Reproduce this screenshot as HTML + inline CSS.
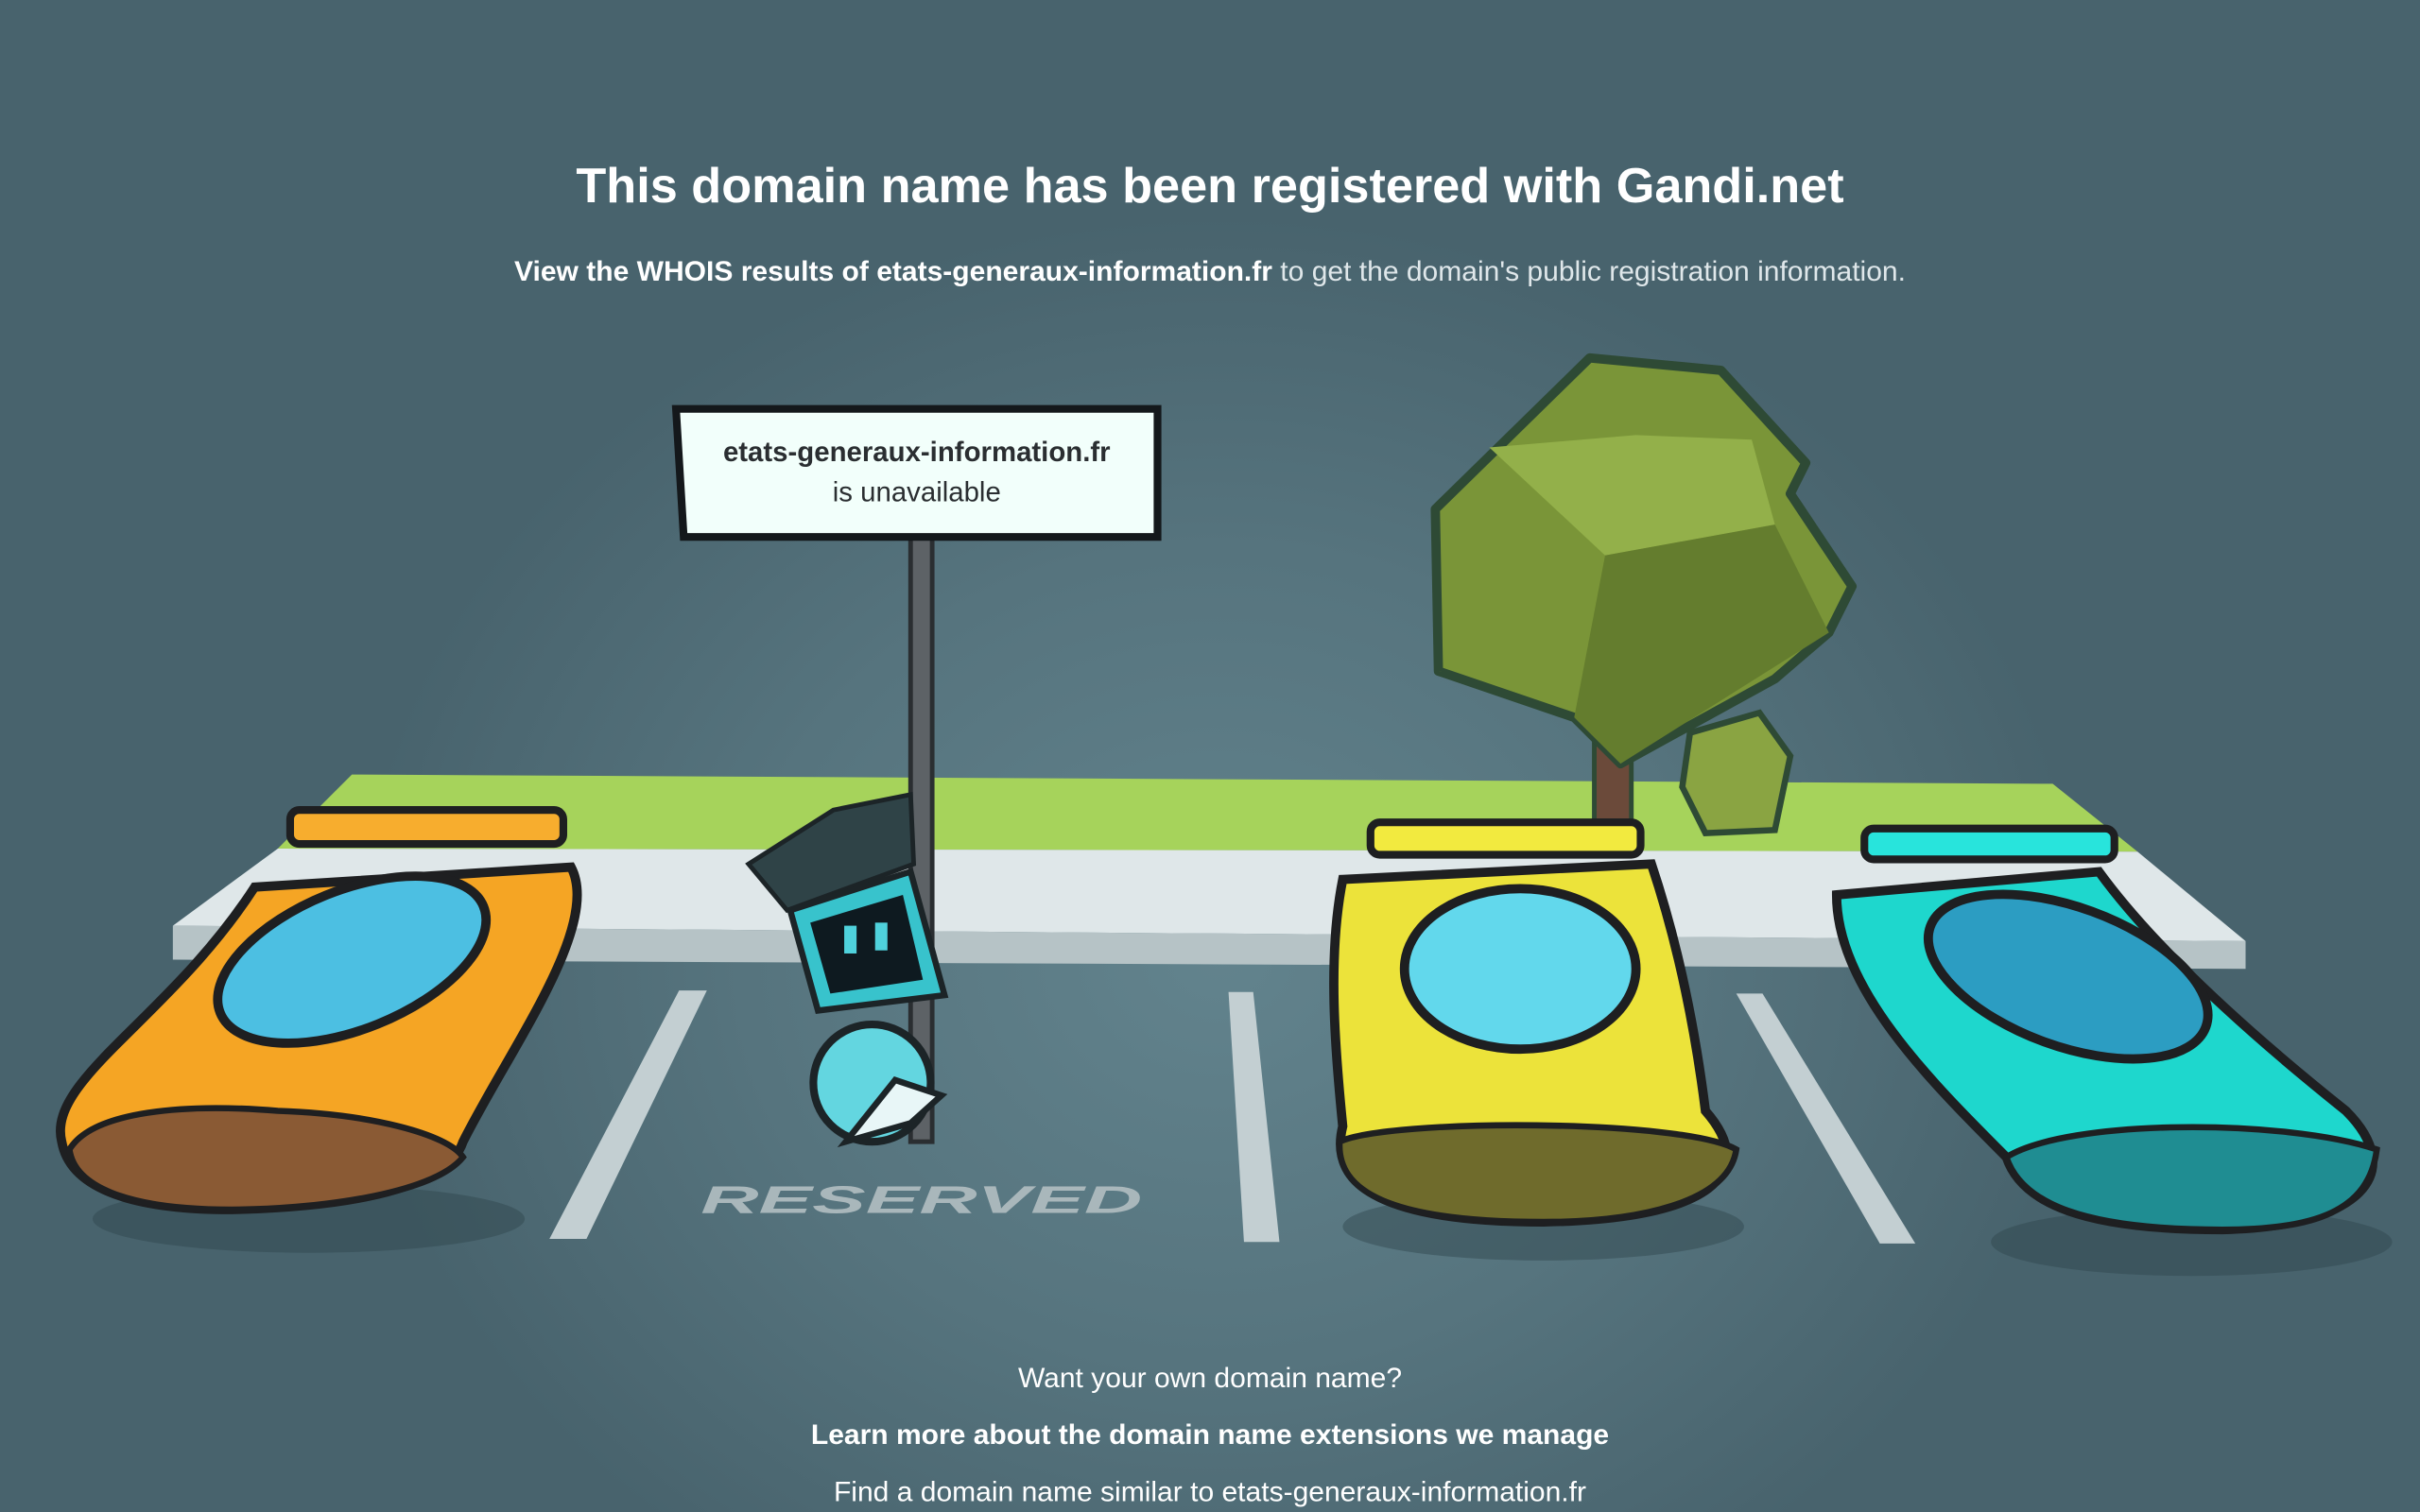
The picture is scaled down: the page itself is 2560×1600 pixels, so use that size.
<!DOCTYPE html>
<html><head><meta charset="utf-8"><style>
html,body{margin:0;padding:0;width:2560px;height:1600px;overflow:hidden;background:#48636d}
#s{position:absolute;left:0;top:0;width:1568px;height:980px;transform:scale(1.632653);transform-origin:0 0;font-family:"Liberation Sans",sans-serif;color:#fff;
background:radial-gradient(ellipse 560px 480px at 790px 620px,#62838d 0%,#56747e 55%,#48636d 100%)}
.t{position:absolute;left:0;width:1568px;text-align:center}
</style></head><body><div id="s">
<div class="t" style="top:102px;font-size:32px;font-weight:bold">This domain name has been registered with Gandi.net</div>
<div class="t" style="top:165px;font-size:18.4px;color:#dfe7ea"><b style="color:#fff">View the WHOIS results of etats-generaux-information.fr</b> to get the domain's public registration information.</div>
<svg width="1568" height="980" style="position:absolute;left:0;top:0">
<g fill="#2f444c" opacity=".45">
<ellipse cx="200" cy="790" rx="140" ry="22"/><ellipse cx="1000" cy="795" rx="130" ry="22"/><ellipse cx="1420" cy="805" rx="130" ry="22"/>
</g>
<polygon points="228,502 1330,508 1385,552 180,550" fill="#a6d35b"/>
<polygon points="180,550 1385,552 1455,610 112,600" fill="#dfe7e9"/>
<polygon points="112,600 1455,610 1455,628 112,622" fill="#b6c3c6"/>
<g fill="#c3cfd2">
<polygon points="440,642 458,642 380,803 356,803"/>
<polygon points="796,643 812,643 829,805 806,805"/>
<polygon points="1125,644 1142,644 1241,806 1218,806"/>
</g>
<text x="454" y="786" textLength="286" lengthAdjust="spacingAndGlyphs" font-family="Liberation Sans" font-weight="900" font-style="italic" font-size="25" fill="#a9b7bb">RESERVED</text>
<!-- tree -->
<rect x="1033" y="480" width="24" height="52" fill="#6b4a3a" stroke="#2e4a35" stroke-width="3"/>
<polygon points="930,330 1030,232 1115,240 1170,300 1160,320 1200,380 1185,410 1150,440 1050,495 1020,465 932,435" fill="#7a9538" stroke="#2e4a35" stroke-width="6" stroke-linejoin="round"/>
<polygon points="965,290 1060,282 1135,285 1150,340 1040,360" fill="#93b04a"/>
<polygon points="1040,360 1150,340 1185,410 1050,495 1020,465" fill="#647d2e"/>
<polygon points="1095,475 1140,462 1160,490 1150,538 1105,540 1090,510" fill="#8aa442" stroke="#2e4a35" stroke-width="4"/>
<!-- sign pole -->
<rect x="590" y="345" width="14" height="395" fill="#5d6266" stroke="#2a2e31" stroke-width="3"/>
<!-- robot -->
<polygon points="485,560 540,525 590,515 592,560 510,590" fill="#2f4347" stroke="#1c2427" stroke-width="3"/>
<polygon points="512,590 590,565 612,645 530,655" fill="#38c3cc" stroke="#1c2427" stroke-width="4"/>
<polygon points="525,598 585,580 598,635 538,644" fill="#0e1a20"/>
<rect x="547" y="600" width="8" height="18" fill="#4fd2dc"/><rect x="567" y="598" width="8" height="18" fill="#4fd2dc"/>
<circle cx="565" cy="702" r="38" fill="#63d6e0" stroke="#1c2427" stroke-width="5"/>
<polygon points="548,740 580,700 610,710 590,728" fill="#e8f6f7" stroke="#1c2427" stroke-width="4"/>
<!-- orange car -->
<path d="M40,740 C30,700 110,660 165,575 L370,562 C390,600 330,680 300,740 C290,770 230,782 150,784 C80,784 45,768 40,740Z" fill="#f5a524" stroke="#1e1f21" stroke-width="6"/>
<path d="M45,745 C60,720 120,715 180,720 C240,722 290,735 300,750 C280,775 200,784 150,784 C80,784 48,768 45,745Z" fill="#8a5a34" stroke="#1e1f21" stroke-width="4"/>
<ellipse cx="228" cy="622" rx="92" ry="45" transform="rotate(-22 228 622)" fill="#4cbfe2" stroke="#1e1f21" stroke-width="6"/>
<rect x="188" y="525" width="177" height="22" rx="6" fill="#f7ad2e" stroke="#1e1f21" stroke-width="5"/>
<!-- yellow car -->
<path d="M870,570 L1070,560 C1090,620 1100,680 1105,720 C1140,760 1110,790 1000,792 C900,792 860,770 870,730 C865,680 860,620 870,570Z" fill="#ece33a" stroke="#1e1f21" stroke-width="6"/>
<path d="M868,740 C900,725 1090,725 1125,745 C1120,780 1060,792 1000,792 C900,792 866,772 868,740Z" fill="#6f6b2c" stroke="#1e1f21" stroke-width="4"/>
<ellipse cx="985" cy="628" rx="75" ry="52" fill="#62d8ec" stroke="#1e1f21" stroke-width="6"/>
<rect x="888" y="533" width="175" height="21" rx="6" fill="#f2ea3f" stroke="#1e1f21" stroke-width="5"/>
<!-- cyan car -->
<path d="M1190,580 L1360,565 C1400,620 1470,680 1520,720 C1560,760 1530,795 1440,797 C1350,797 1310,780 1300,750 C1250,700 1190,640 1190,580Z" fill="#1ed7cd" stroke="#1e1f21" stroke-width="6"/>
<path d="M1300,750 C1340,725 1480,725 1540,745 C1535,785 1500,797 1440,797 C1350,797 1310,780 1300,750Z" fill="#1f8d92" stroke="#1e1f21" stroke-width="4"/>
<ellipse cx="1340" cy="633" rx="95" ry="45" transform="rotate(20 1340 633)" fill="#2c9dc2" stroke="#1e1f21" stroke-width="6"/>
<rect x="1208" y="537" width="162" height="20" rx="6" fill="#28e4dc" stroke="#1e1f21" stroke-width="5"/>
<!-- sign -->
<polygon points="438,265 750,265 750,348 443,348" fill="#f2fffb" stroke="#14181b" stroke-width="5"/>
<text x="594" y="299" text-anchor="middle" font-family="Liberation Sans" font-weight="bold" font-size="18" fill="#2a2e31">etats-generaux-information.fr</text>
<text x="594" y="325" text-anchor="middle" font-family="Liberation Sans" font-size="18" fill="#2a2e31">is unavailable</text>
</svg>
<div class="t" style="top:882px;font-size:18.4px">Want your own domain name?</div>
<div class="t" style="top:919px;font-size:18.4px;font-weight:bold">Learn more about the domain name extensions we manage</div>
<div class="t" style="top:956px;font-size:18.4px">Find a domain name similar to etats-generaux-information.fr</div>
</div></body></html>
